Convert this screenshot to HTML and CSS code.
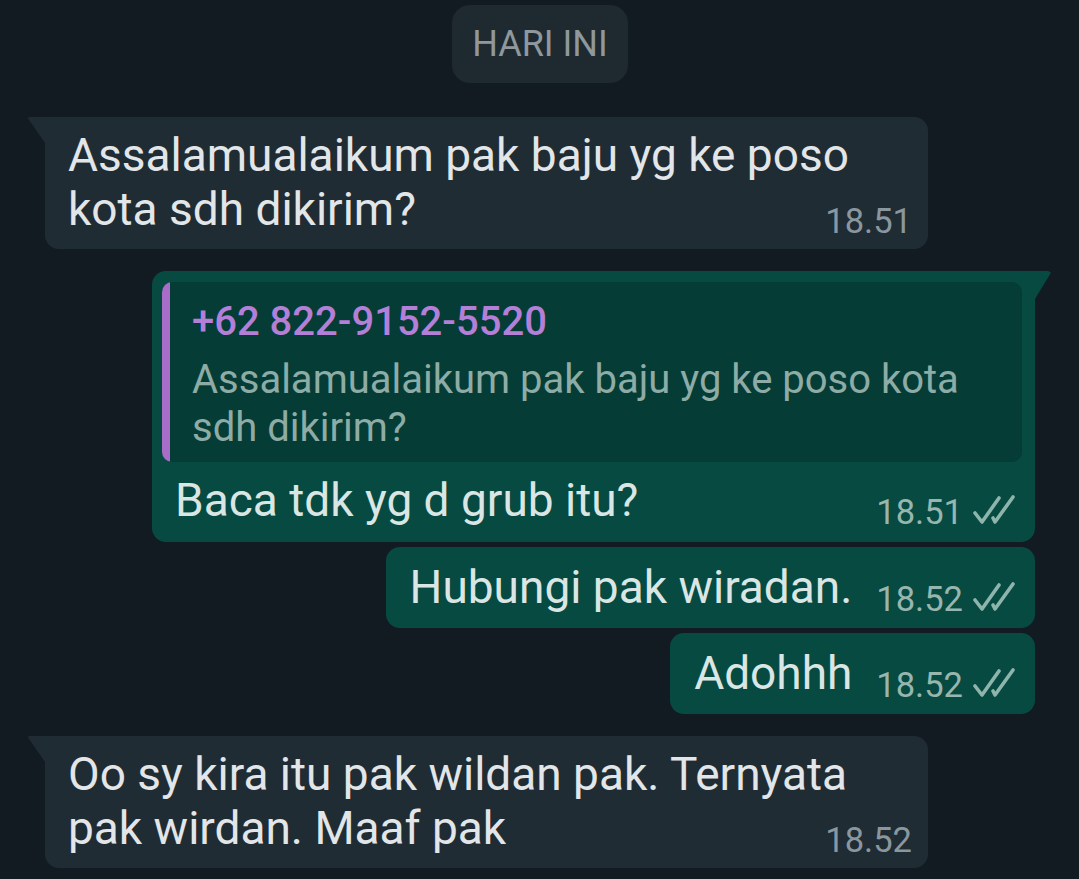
FILE: index.html
```html
<!DOCTYPE html>
<html lang="id">
<head>
<meta charset="utf-8">
<title>Chat</title>
<link rel="stylesheet" href="styles.css">
</head>
<body>
<div class="chat">
  <div class="date">HARI INI</div>

  <div class="msg in tail multi gap-lg">
    <div class="text">Assalamualaikum pak baju yg ke poso kota sdh dikirim?</div>
    <div class="meta"><span class="time">18.51</span></div>
  </div>

  <div class="msg out tail reply gap-sm">
    <div class="quote">
      <div class="bar"></div>
      <div class="quote-body">
        <div class="quote-name">+62 822-9152-5520</div>
        <div class="quote-text">Assalamualaikum pak baju yg ke poso kota sdh dikirim?</div>
      </div>
    </div>
    <div class="row">
      <div class="text">Baca tdk yg d grub itu?</div>
      <div class="meta">
        <span class="time">18.51</span>
        <svg class="ticks" viewBox="0 0 44 30" width="44" height="30" aria-hidden="true"><path d="M2 18 L9 27 L26 3"/><path d="M20 23 L22 27 L40 2"/></svg>
      </div>
    </div>
  </div>

  <div class="msg out single gap-sm">
    <div class="text">Hubungi pak wiradan.</div>
    <div class="meta">
      <span class="time">18.52</span>
      <svg class="ticks" viewBox="0 0 44 30" width="44" height="30" aria-hidden="true"><path d="M2 18 L9 27 L26 3"/><path d="M20 23 L22 27 L40 2"/></svg>
    </div>
  </div>

  <div class="msg out single gap-lg">
    <div class="text">Adohhh</div>
    <div class="meta">
      <span class="time">18.52</span>
      <svg class="ticks" viewBox="0 0 44 30" width="44" height="30" aria-hidden="true"><path d="M2 18 L9 27 L26 3"/><path d="M20 23 L22 27 L40 2"/></svg>
    </div>
  </div>

  <div class="msg in tail multi">
    <div class="text">Oo sy kira itu pak wildan pak. Ternyata pak wirdan. Maaf pak</div>
    <div class="meta"><span class="time">18.52</span></div>
  </div>
</div>
</body>
</html>
```

FILE: styles.css
```css
html, body {
  margin: 0;
  padding: 0;
  background: #111b21;
  min-height: 100%;
}

body {
  font-family: Roboto, "Noto Sans", "Liberation Sans", sans-serif;
  -webkit-font-smoothing: antialiased;
}

.chat {
  display: flex;
  flex-direction: column;
  padding: 5px 44px 0 45px;
}

.date {
  align-self: center;
  background: #1f2a30;
  color: #8e989d;
  font-size: 36px;
  line-height: 42px;
  padding: 18px 20px;
  border-radius: 18px;
  margin-bottom: 34px;
}

.msg {
  position: relative;
  box-sizing: border-box;
  max-width: 883px;
  border-radius: 14px;
}

.gap-lg { margin-bottom: 22px; }
.gap-sm { margin-bottom: 5px; }

.in {
  align-self: flex-start;
  background: #202c33;
  color: #e2e6e9;
}

.out {
  align-self: flex-end;
  background: #074a42;
  color: #dae6e3;
}

.in.tail { border-top-left-radius: 0; }
.out.tail { border-top-right-radius: 0; }

.in.tail::before {
  content: "";
  position: absolute;
  left: -18px;
  top: 0;
  width: 18px;
  height: 26px;
  background: inherit;
  border-top-left-radius: 3px;
  clip-path: polygon(0 0, 100% 0, 100% 100%);
}

.out.tail::before {
  content: "";
  position: absolute;
  right: -17px;
  top: 0;
  width: 17px;
  height: 28px;
  background: inherit;
  border-top-right-radius: 5px;
  clip-path: polygon(0 0, 100% 0, 0 100%);
}

.text {
  font-size: 46px;
  line-height: 54px;
}

.time {
  font-size: 34.5px;
  line-height: 38px;
}

.in .time { color: #8a979f; }
.out .time { color: #96b6ae; }

.meta {
  display: flex;
  align-items: flex-end;
  flex-shrink: 0;
}

.ticks {
  display: block;
  margin-left: 10px;
  margin-bottom: 6px;
  fill: none;
  stroke: #8db5ab;
  stroke-width: 3.6;
  stroke-linecap: round;
  stroke-linejoin: round;
}

/* multi-line incoming bubbles */
.multi {
  width: 883px;
  padding: 11px 16px 9px 23px;
}

.multi .meta {
  justify-content: flex-end;
  margin-top: -34px;
}

/* single-line outgoing bubbles */
.single {
  display: flex;
  align-items: flex-end;
  padding: 13px 18px 10px 24px;
}

.single .text { margin-bottom: 4px; }
.single .meta { margin-left: 24px; }

/* reply bubble */
.reply {
  width: 883px;
  display: flex;
  flex-direction: column;
  padding: 11px 13px 11px 10px;
}

.quote {
  display: flex;
  background: #053d36;
  border-radius: 10px;
  overflow: hidden;
}

.bar {
  width: 8px;
  flex-shrink: 0;
  background: #a86dc8;
}

.quote-body {
  padding: 16px 20px 10px 22px;
}

.quote-name {
  color: #b47fd6;
  font-size: 40px;
  font-weight: 500;
  line-height: 48px;
}

.quote-text {
  color: #8eaca6;
  font-size: 40px;
  line-height: 48px;
  margin-top: 10px;
}

.row {
  display: flex;
  align-items: flex-end;
  justify-content: space-between;
  margin-top: 11px;
  padding: 0 5px 0 13px;
}

.row .text { margin-bottom: 4px; }
```
